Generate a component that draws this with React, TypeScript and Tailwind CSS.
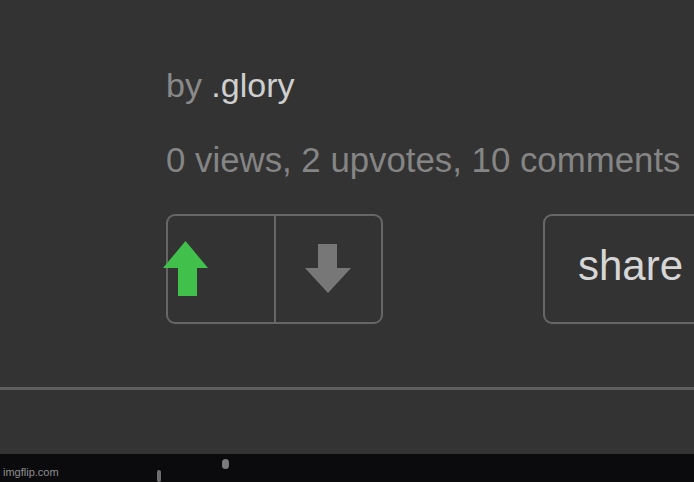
export default function App() {
  return (
    <div className="w-[694px] h-[482px] bg-[#333333] overflow-hidden flex flex-col font-['Liberation_Sans',Arial,sans-serif]">
      <div className="h-[387px] pl-[166px] pt-[68px] flex flex-col">
        <div className="text-[34px] leading-none whitespace-nowrap">
          <span className="text-[#8a8a8a]">by </span>
          <span className="text-[#cfcfcf]">.glory</span>
        </div>
        <div className="mt-[41px] text-[34.8px] leading-none text-[#858585] whitespace-nowrap">
          0 views, 2 upvotes, 10 comments
        </div>

        <div className="mt-[36px] flex items-start">
          <div className="w-[217px] h-[110px] shrink-0 border-2 border-[#666666] rounded-[9px] flex">
            <button className="w-[106px] h-full flex items-start">
              <svg width="45" height="55" viewBox="0 0 45 55" className="-ml-[5px] mt-[25px]">
                <polygon points="22.5,0 45,27 34,27 34,55 15,55 15,27 0,27" fill="#41c04c" />
              </svg>
            </button>
            <button className="flex-1 h-full border-l-2 border-[#666666] flex items-start">
              <svg width="46" height="49" viewBox="0 0 46 49" className="ml-[29px] mt-[28px]">
                <polygon points="13,0 32,0 32,24 46,24 23,49 0,24 13,24" fill="#777777" />
              </svg>
            </button>
          </div>

          <button className="ml-[160px] w-[200px] h-[110px] shrink-0 border-2 border-[#666666] rounded-[9px] flex items-start pl-[33px] pt-[29px]">
            <span className="text-[42px] leading-none text-[#d6d6d6]">share</span>
          </button>
        </div>
      </div>

      <div className="h-[3px] bg-[#5f5f5f]" />
      <div className="h-[64px] bg-[#333333]" />

      <div className="h-[28px] bg-[#0b0b0e] relative">
        <span className="absolute left-[3px] top-[13px] text-[11px] leading-none text-[#8e8e8e]">imgflip.com</span>
        <div className="absolute left-[157px] top-[16px] w-[4px] h-[12px] rounded-full bg-[#6e6e6e]" />
        <div className="absolute left-[222px] top-[5px] w-[7px] h-[10px] rounded-full bg-[#7a7a7a]" />
      </div>
    </div>
  );
}
